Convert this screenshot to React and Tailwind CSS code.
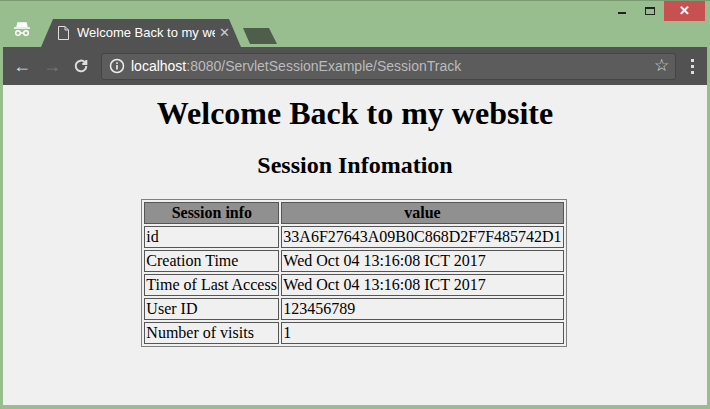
export default function App() {
  const rows = [
    ["id", "33A6F27643A09B0C868D2F7F485742D1"],
    ["Creation Time", "Wed Oct 04 13:16:08 ICT 2017"],
    ["Time of Last Access", "Wed Oct 04 13:16:08 ICT 2017"],
    ["User ID", "123456789"],
    ["Number of visits", "1"],
  ];
  return (
    <div className="w-[710px] h-[409px] bg-[#98be8f] flex flex-col px-[3px] pb-[4px] overflow-hidden border-t border-[#7a9a72]" style={{ fontFamily: "'Liberation Sans', Arial, sans-serif" }}>
      <div className="h-[46px] relative flex items-end">
        <div className="absolute left-[10px] top-[20px]">
          <svg width="18" height="16" viewBox="0 0 18 16" fill="none" stroke="white" strokeWidth="1.5">
            <path d="M4 6 L5 2 H13 L14 6" fill="white" />
            <path d="M1 7 H17" />
            <circle cx="5" cy="12" r="2.3" />
            <circle cx="13" cy="12" r="2.3" />
            <path d="M7.3 12 H10.7" />
          </svg>
        </div>
        <div className="absolute right-[2px] top-0 flex items-start">
          <div className="w-[28px] h-[20px] flex items-center justify-center"><div className="w-[8px] h-[2px] bg-[#222] mt-[4px]" /></div>
          <div className="w-[28px] h-[20px] flex items-center justify-center"><div className="w-[10px] h-[8px] border border-[#222] border-t-2" /></div>
          <div className="w-[41px] h-[20px] bg-[#c75050] flex items-center justify-center text-white text-[13px] font-bold">✕</div>
        </div>
        <div className="ml-[38px] h-[28px] w-[200px] relative">
          <svg className="absolute inset-0" width="200" height="28"><path d="M0 28 L12 0 H188 L200 28 Z" fill="#525252" /></svg>
          <div className="relative flex items-center h-full pl-[17px] pr-[14px] text-white text-[13px]">
            <svg className="shrink-0" width="11" height="14" viewBox="0 0 11 14" fill="none" stroke="#ddd" strokeWidth="1"><path d="M0.5 0.5 H7 L10.5 4 V13.5 H0.5 Z M7 0.5 V4 H10.5" /></svg>
            <div className="ml-[8px] whitespace-nowrap overflow-hidden w-[138px] shrink-0">Welcome Back to my website</div>
            <span className="ml-[4px] text-[#ccc] text-[13px]">✕</span>
          </div>
        </div>
        <svg className="ml-[2px] mb-[3px]" width="34" height="16"><path d="M0 0 H26 L34 16 H7 Z" fill="#4e5e4b" /></svg>
      </div>
      <div className="h-[38px] bg-[#525252] flex items-center pl-[10px] pr-[10px] gap-[12px]">
        <span className="text-[#ddd] text-[18px] w-[18px]">←</span>
        <span className="text-[#777] text-[18px] w-[18px]">→</span>
        <svg width="16" height="16" viewBox="0 0 24 24" fill="none" stroke="#ddd" strokeWidth="3"><path d="M20 12a8 8 0 1 1-2.3-5.7" /><path d="M20 3v6h-6" fill="#ddd" /></svg>
        <div className="flex-1 h-[27px] bg-[#5c5c5c] rounded-[3px] border border-[#444] flex items-center pl-[7px] pr-[6px] text-[14px]">
          <svg width="16" height="16" viewBox="0 0 16 16"><circle cx="8" cy="8" r="6.5" fill="none" stroke="#eee" strokeWidth="1.5" /><rect x="7.2" y="7" width="1.6" height="4.5" fill="#eee" /><rect x="7.2" y="4.3" width="1.6" height="1.6" fill="#eee" /></svg>
          <span className="ml-[6px] text-white">localhost</span>
          <span className="text-[#bbb]">:8080/ServletSessionExample/SessionTrack</span>
          <span className="ml-auto text-[#ddd] text-[17px]">☆</span>
        </div>
        <div className="flex flex-col gap-[3px] mx-[3px]">
          <div className="w-[3px] h-[3px] bg-[#ddd]" /><div className="w-[3px] h-[3px] bg-[#ddd]" /><div className="w-[3px] h-[3px] bg-[#ddd]" />
        </div>
      </div>
      <div className="flex-1 bg-[#f0f0f0] flex flex-col items-center text-black" style={{ fontFamily: "'Liberation Serif', 'Times New Roman', serif" }}>
        <h1 className="text-[32px] font-bold mt-[10px] leading-[36px]">Welcome Back to my website</h1>
        <h2 className="text-[24px] font-bold mt-[20px] leading-[28px]">Session Infomation</h2>
        <table className="mt-[20px] border border-[#808080] border-separate border-spacing-[2px] text-[16px] leading-[18px] ml-[-2px]">
          <tbody>
            <tr>
              <th className="bg-[#909090] border border-[#555] px-[1px] py-[1px] w-[135px]">Session info</th>
              <th className="bg-[#909090] border border-[#555] px-[1px] py-[1px]">value</th>
            </tr>
            {rows.map(([a, b]) => (
              <tr key={a}>
                <td className="border border-[#555] px-[1px] py-[1px] whitespace-nowrap">{a}</td>
                <td className="border border-[#555] px-[1px] py-[1px] whitespace-nowrap">{b}</td>
              </tr>
            ))}
          </tbody>
        </table>
      </div>
    </div>
  );
}
